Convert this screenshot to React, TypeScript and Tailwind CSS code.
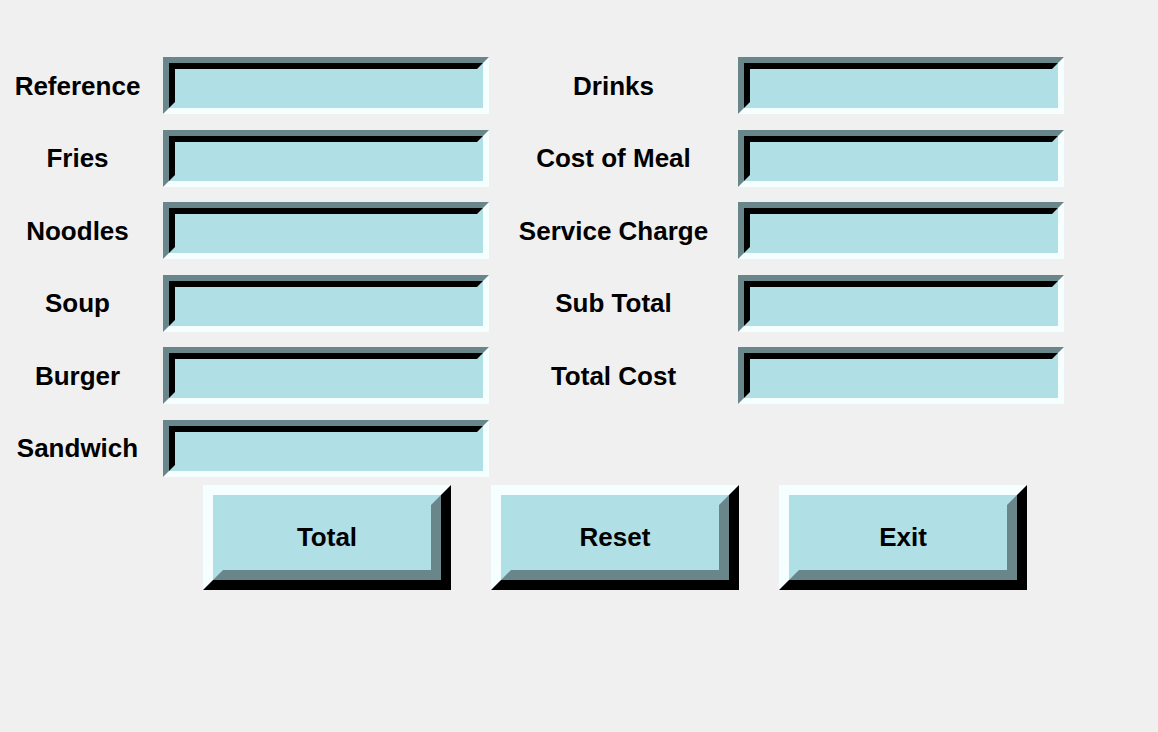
import React from "react";

const leftLabels = ["Reference", "Fries", "Noodles", "Soup", "Burger", "Sandwich"];
const rightLabels = ["Drinks", "Cost of Meal", "Service Charge", "Sub Total", "Total Cost"];

function Entry() {
  return (
    <div className="h-[57px] w-[326px] border-[6px] border-t-[#69868a] border-l-[#69868a] border-b-[#f6ffff] border-r-[#f6ffff]">
      <input
        className="block h-full w-full border-[6px] border-t-black border-l-black border-b-[#b0e0e6] border-r-[#b0e0e6] bg-[#b0e0e6] outline-none px-1 text-[26px] font-bold"
        style={{ fontFamily: '"Liberation Sans", Arial, sans-serif' }}
      />
    </div>
  );
}

function Label({ text }: { text: string }) {
  return (
    <div className="flex items-center justify-center text-[26px] font-bold text-black leading-none">
      {text}
    </div>
  );
}

function TkButton({ text }: { text: string }) {
  return (
    <button className="h-[105px] w-[248px] border-[10px] border-t-[#f6ffff] border-l-[#f6ffff] border-b-black border-r-black p-0">
      <div className="flex h-full w-full items-center justify-center border-[10px] border-t-[#b0e0e6] border-l-[#b0e0e6] border-b-[#69868a] border-r-[#69868a] bg-[#b0e0e6] text-[26px] font-bold text-black">
        {text}
      </div>
    </button>
  );
}

export default function App() {
  const rows = [];
  for (let i = 0; i < 6; i++) {
    rows.push(
      <React.Fragment key={i}>
        <Label text={leftLabels[i]} />
        <Entry />
        {i < 5 ? <Label text={rightLabels[i]} /> : <div />}
        {i < 5 ? <Entry /> : <div />}
      </React.Fragment>
    );
  }
  return (
    <div
      className="h-[732px] w-[1158px] bg-[#f0f0f0] pt-[57px]"
      style={{ fontFamily: '"Liberation Sans", Arial, sans-serif' }}
    >
      <div className="grid grid-cols-[155px_326px_233px_326px] gap-x-2 gap-y-[15.6px]">
        {rows}
      </div>
      <div className="mt-2 flex gap-[40px] pl-[203px]">
        <TkButton text="Total" />
        <TkButton text="Reset" />
        <TkButton text="Exit" />
      </div>
    </div>
  );
}
